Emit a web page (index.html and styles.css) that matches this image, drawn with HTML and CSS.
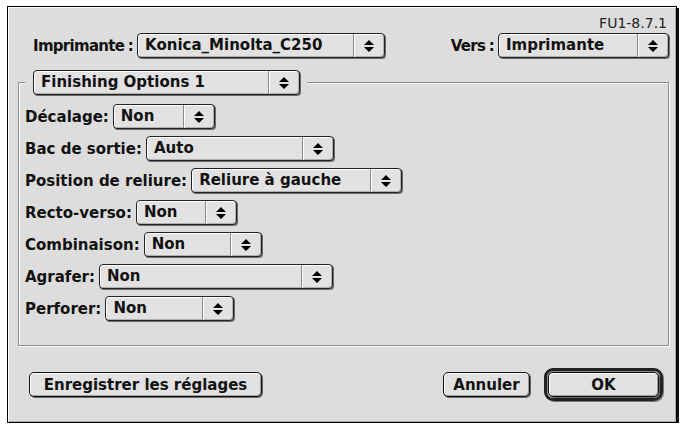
FILE: index.html
```html
<!DOCTYPE html>
<html lang="fr">
<head>
    <meta charset="UTF-8">
    <title>Imprimer</title>
    <link rel="stylesheet" href="styles.css">
</head>
<body>
    <div class="dialog">
        <div class="version">FU1-8.7.1</div>

        <div class="header">
            <div class="field">
                <span class="label wide">Imprimante :</span>
                <div class="popup w-printer">
                    <span class="value">Konica_Minolta_C250</span>
                    <span class="arrows"><svg width="10" height="12" viewBox="0 0 10 12"><path d="M0 5 L5 0 L10 5 Z M0 7 L10 7 L5 12 Z" fill="#000"/></svg></span>
                </div>
            </div>
            <div class="field">
                <span class="label wide">Vers :</span>
                <div class="popup w-dest">
                    <span class="value">Imprimante</span>
                    <span class="arrows"><svg width="10" height="12" viewBox="0 0 10 12"><path d="M0 5 L5 0 L10 5 Z M0 7 L10 7 L5 12 Z" fill="#000"/></svg></span>
                </div>
            </div>
        </div>

        <fieldset class="group">
            <legend>
                <div class="popup w-panel">
                    <span class="value">Finishing Options 1</span>
                    <span class="arrows"><svg width="10" height="12" viewBox="0 0 10 12"><path d="M0 5 L5 0 L10 5 Z M0 7 L10 7 L5 12 Z" fill="#000"/></svg></span>
                </div>
            </legend>

            <div class="row">
                <span class="label">Décalage:</span>
                <div class="popup w-102">
                    <span class="value">Non</span>
                    <span class="arrows"><svg width="10" height="12" viewBox="0 0 10 12"><path d="M0 5 L5 0 L10 5 Z M0 7 L10 7 L5 12 Z" fill="#000"/></svg></span>
                </div>
            </div>
            <div class="row">
                <span class="label">Bac de sortie:</span>
                <div class="popup w-188">
                    <span class="value">Auto</span>
                    <span class="arrows"><svg width="10" height="12" viewBox="0 0 10 12"><path d="M0 5 L5 0 L10 5 Z M0 7 L10 7 L5 12 Z" fill="#000"/></svg></span>
                </div>
            </div>
            <div class="row">
                <span class="label">Position de reliure:</span>
                <div class="popup w-211">
                    <span class="value">Reliure à gauche</span>
                    <span class="arrows"><svg width="10" height="12" viewBox="0 0 10 12"><path d="M0 5 L5 0 L10 5 Z M0 7 L10 7 L5 12 Z" fill="#000"/></svg></span>
                </div>
            </div>
            <div class="row">
                <span class="label">Recto-verso:</span>
                <div class="popup w-101">
                    <span class="value">Non</span>
                    <span class="arrows"><svg width="10" height="12" viewBox="0 0 10 12"><path d="M0 5 L5 0 L10 5 Z M0 7 L10 7 L5 12 Z" fill="#000"/></svg></span>
                </div>
            </div>
            <div class="row">
                <span class="label">Combinaison:</span>
                <div class="popup w-118">
                    <span class="value">Non</span>
                    <span class="arrows"><svg width="10" height="12" viewBox="0 0 10 12"><path d="M0 5 L5 0 L10 5 Z M0 7 L10 7 L5 12 Z" fill="#000"/></svg></span>
                </div>
            </div>
            <div class="row">
                <span class="label">Agrafer:</span>
                <div class="popup w-234">
                    <span class="value">Non</span>
                    <span class="arrows"><svg width="10" height="12" viewBox="0 0 10 12"><path d="M0 5 L5 0 L10 5 Z M0 7 L10 7 L5 12 Z" fill="#000"/></svg></span>
                </div>
            </div>
            <div class="row">
                <span class="label">Perforer:</span>
                <div class="popup w-129">
                    <span class="value">Non</span>
                    <span class="arrows"><svg width="10" height="12" viewBox="0 0 10 12"><path d="M0 5 L5 0 L10 5 Z M0 7 L10 7 L5 12 Z" fill="#000"/></svg></span>
                </div>
            </div>
        </fieldset>

        <div class="buttons">
            <button class="btn btn-save">Enregistrer les réglages</button>
            <div class="actions">
                <button class="btn btn-cancel">Annuler</button>
                <div class="default-ring">
                    <button class="btn btn-ok">OK</button>
                </div>
            </div>
        </div>
    </div>
</body>
</html>
```

FILE: styles.css
```css
body {
    margin: 0;
    background: #fff;
    font-family: "DejaVu Sans", sans-serif;
    font-weight: bold;
    font-size: 15px;
    color: #111;
}

/* window frame */
.dialog {
    box-sizing: border-box;
    width: 670px;
    height: 417px;
    margin: 6px 0 0 7px;
    padding: 8px 7px 0 10px;
    background: #dddddd;
    border: 1px solid #000;
    box-shadow: inset 1px 1px 0 #fff, inset -1px -1px 0 #a8a8a8, 2px 2px 0 #111;
}

.version {
    text-align: right;
    font-weight: normal;
    font-size: 14px;
    line-height: 16px;
    color: #222;
    padding-right: 2px;
}

.header {
    display: flex;
    justify-content: space-between;
    align-items: center;
    margin: 2px 0 0 15px;
}

.field {
    display: flex;
    align-items: center;
    gap: 4px;
}

.label {
    white-space: nowrap;
}

.label.wide {
    letter-spacing: -0.7px;
    word-spacing: -1px;
}

/* popup menus */
.popup {
    box-sizing: border-box;
    display: flex;
    height: 25px;
    border: 1px solid #222;
    border-radius: 4px;
    background: #e2e2e2;
    box-shadow: inset 1px 1px 0 #fff, inset -1px -1px 0 #b0b0b0, 1px 1px 0 #6a6a6a;
}

.popup .value {
    flex: 1;
    padding-left: 7px;
    line-height: 23px;
    white-space: nowrap;
}

.popup .arrows {
    width: 30px;
    display: flex;
    align-items: center;
    justify-content: center;
    border-left: 1px solid #8a8a8a;
    box-shadow: inset 1px 0 0 #fff;
}

.w-printer { width: 248px; }
.w-dest { width: 171px; }
.w-panel { width: 267px; }
.w-101 { width: 101px; }
.w-102 { width: 102px; }
.w-118 { width: 118px; }
.w-129 { width: 129px; }
.w-188 { width: 188px; }
.w-211 { width: 211px; }
.w-234 { width: 234px; }

/* group box */
.group {
    margin: 12px 0 0 0;
    padding: 9px 6px 24px 6px;
    min-width: 0;
    border: 1px solid #8c8c8c;
    box-shadow: inset 1px 1px 0 #fff, 1px 1px 0 #fff;
    display: flex;
    flex-direction: column;
    gap: 7px;
}

.group legend {
    padding: 0 7px 0 8px;
    margin-left: 0;
    background: #dddddd;
}

.row {
    display: flex;
    align-items: center;
    gap: 4px;
}

/* push buttons */
.buttons {
    display: flex;
    justify-content: space-between;
    align-items: center;
    margin: 22px 6px 0 11px;
}

.actions {
    display: flex;
    align-items: center;
    gap: 14px;
}

.btn {
    box-sizing: border-box;
    height: 25px;
    padding: 0;
    font-family: inherit;
    font-weight: bold;
    font-size: 15px;
    color: #111;
    background: #e2e2e2;
    border: 1px solid #111;
    border-radius: 5px;
    box-shadow: inset 1px 1px 0 #fff, inset -1px -1px 0 #a0a0a0, 1px 1px 0 #666;
}

.btn-save { width: 233px; }
.btn-cancel { width: 87px; }
.btn-ok { width: 111px; display: block; }

.default-ring {
    padding: 1px;
    border: 3px solid #222;
    border-radius: 9px;
    box-shadow: inset 1px 1px 0 #888, 1px 1px 0 #777;
}
```
